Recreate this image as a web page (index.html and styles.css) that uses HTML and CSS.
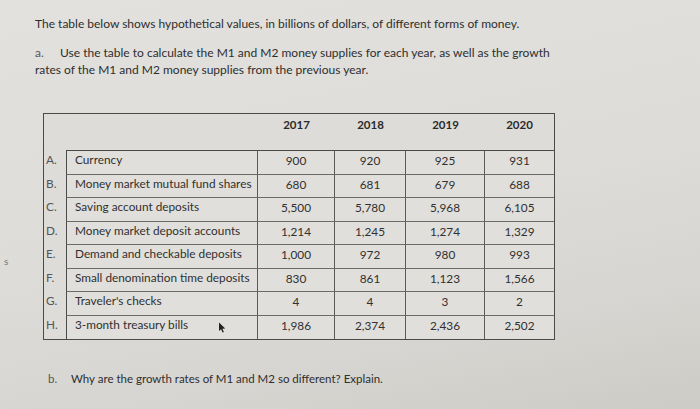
FILE: index.html
```html
<!DOCTYPE html>
<html>
<head>
<meta charset="utf-8">
<link rel="stylesheet" href="styles.css">
</head>
<body>
<div class="page">
  <span class="stray">s</span>
  <p class="intro">The table below shows hypothetical values, in billions of dollars, of different forms of money.</p>
  <div class="qa">
    <p class="q"><span class="qlabel">a.</span>Use the table to calculate the M1 and M2 money supplies for each year, as well as the growth</p>
    <p class="q2">rates of the M1 and M2 money supplies from the previous year.</p>
  </div>
  <div class="box">
    <div class="hd blank"></div><div class="hd hl"></div>
    <div class="hd yr">2017</div><div class="hd yr">2018</div><div class="hd yr">2019</div><div class="hd yr last">2020</div>

    <div class="let">A.</div><div class="lab">Currency</div><div class="num">900</div><div class="num">920</div><div class="num">925</div><div class="num last">931</div>
    <div class="let">B.</div><div class="lab">Money market mutual fund shares</div><div class="num">680</div><div class="num">681</div><div class="num">679</div><div class="num last">688</div>
    <div class="let">C.</div><div class="lab">Saving account deposits</div><div class="num">5,500</div><div class="num">5,780</div><div class="num">5,968</div><div class="num last">6,105</div>
    <div class="let">D.</div><div class="lab">Money market deposit accounts</div><div class="num">1,214</div><div class="num">1,245</div><div class="num">1,274</div><div class="num last">1,329</div>
    <div class="let">E.</div><div class="lab">Demand and checkable deposits</div><div class="num">1,000</div><div class="num">972</div><div class="num">980</div><div class="num last">993</div>
    <div class="let">F.</div><div class="lab">Small denomination time deposits</div><div class="num">830</div><div class="num">861</div><div class="num">1,123</div><div class="num last">1,566</div>
    <div class="let">G.</div><div class="lab">Traveler's checks</div><div class="num">4</div><div class="num">4</div><div class="num">3</div><div class="num last">2</div>
    <div class="let end">H.</div><div class="lab end cursorcell">3-month treasury bills<svg class="cursor" width="8" height="11" viewBox="0 0 8 11"><path d="M1 0.5 L1 9 L3 7.2 L4.6 10.5 L5.9 9.9 L4.4 6.7 L7.2 6.5 Z" fill="#222"/></svg></div><div class="num end">1,986</div><div class="num end">2,374</div><div class="num end">2,436</div><div class="num end last">2,502</div>
  </div>
  <p class="qb"><span class="qlabel">b.</span>Why are the growth rates of M1 and M2 so different? Explain.</p>
</div>
</body>
</html>
```

FILE: styles.css
```css
html, body {
  margin: 0;
  padding: 0;
}
body {
  width: 700px;
  height: 409px;
  overflow: hidden;
  background: linear-gradient(168deg, #e2e1de 0%, #dddcd9 50%, #d6d5d1 78%, #cdcbc6 100%);
  font-family: Lato, "Open Sans", sans-serif;
  color: #2e2e2e;
}
.page {
  position: relative;
  padding: 15.5px 0 0 35px;
  height: 393px;
}
.stray {
  position: absolute;
  left: 4px;
  top: 255px;
  font-size: 10px;
  color: #777;
}
p { margin: 0; }
.intro {
  font-size: 12px;
  line-height: 15px;
}
.qa {
  margin-top: 13px;
  font-size: 12px;
  line-height: 17px;
}
.qlabel {
  display: inline-block;
  color: #555;
}
.qa .qlabel { width: 25px; }
.box {
  margin-top: 35.5px;
  margin-left: 8px;
  width: 510px;
  display: grid;
  grid-template-columns: 22px 192px 77px 71px 79px 1fr;
  grid-template-rows: 37px repeat(8, 23.5px);
  border: 1.5px solid #4a4a4a;
  background: #dedcd8;
  font-size: 11.8px;
  line-height: 14px;
  color: #303030;
}
.hd { border-bottom: 1.5px solid #4a4a4a; }
.hd.blank { border-bottom: none; }
.yr {
  font-weight: 700;
  font-size: 11.5px;
  text-align: center;
  padding-top: 4px;
  color: #2a2a2a;
}
.let {
  padding: 2px 0 0 2px;
  color: #555;
}
.lab {
  border-left: 1.5px solid #4a4a4a;
  border-right: 1px solid #5a5a5a;
  border-bottom: 1px solid #6a6a6a;
  padding: 2px 0 0 8px;
  background: #e1dfdb;
}
.num {
  border-right: 1px solid #5a5a5a;
  border-bottom: 1px solid #6a6a6a;
  text-align: center;
  padding-top: 3px;
  background: #e1dfdb;
}
.num.last { border-right: none; }
.end { border-bottom: none; }
.cursorcell { position: relative; }
.cursor {
  position: absolute;
  left: 151px;
  top: 6px;
}
.qb {
  margin-top: 32px;
  margin-left: 13px;
  font-size: 11.5px;
  line-height: 14px;
}
.qb .qlabel { width: 23px; }
```
